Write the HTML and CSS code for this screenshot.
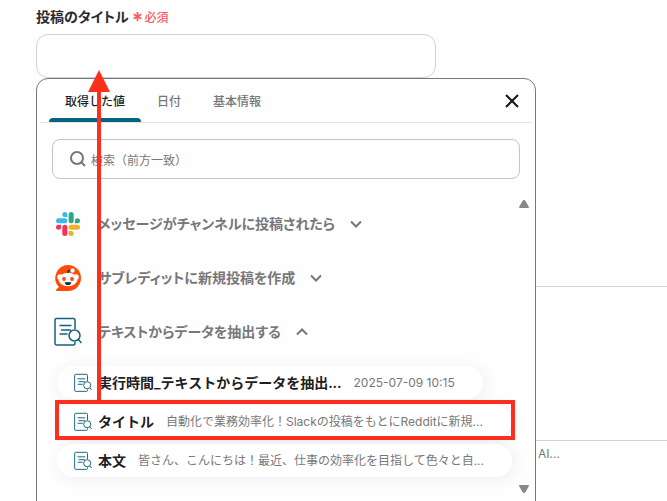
FILE: index.html
```html
<!DOCTYPE html>
<html lang="ja">
<head>
<meta charset="utf-8">
<title>投稿のタイトル</title>
<link rel="stylesheet" href="styles.css">
</head>
<body>
<svg class="defs" aria-hidden="true">
  <symbol id="doc" viewBox="0 0 28 30">
    <path d="M21 12V3a1.5 1.5 0 0 0-1.500-1.500H2.500A1.500 1.500 0 0 0 1 3v23.500A1.500 1.500 0 0 0 2.500 28h17a1.500 1.500 0 0 0 1.500-1.500v-1.500M5.500 8.500h12M7 13h10M5.500 17h8"/>
    <circle cx="20.500" cy="18.500" r="5.500"/>
    <path d="M24.500 22.500l3 3.500"/>
  </symbol>
  <symbol id="chevron" viewBox="0 0 12 8"><path d="M1 1.500l5 5 5-5"/></symbol>
</svg>
<main class="page">
  <section class="field">
    <label class="field-label" for="title">投稿のタイトル <span class="required"><svg class="asterisk" viewBox="0 0 10 10" aria-hidden="true"><path d="M5 0v10M.7 2.500l8.600 5M.7 7.500l8.600-5"/></svg>必須</span></label>
    <input class="field-input" id="title" type="text">
    <div class="picker">
      <header class="picker-head">
        <nav class="tabs">
          <button class="tab tab-active" type="button">取得した値</button>
          <button class="tab" type="button">日付</button>
          <button class="tab" type="button">基本情報</button>
        </nav>
        <button class="close" type="button" aria-label="閉じる"><svg viewBox="0 0 14 14"><path d="M1 1l12 12M13 1L1 13"/></svg></button>
      </header>
      <div class="search">
        <svg viewBox="0 0 16 16" aria-hidden="true"><circle cx="7" cy="7" r="6"/><path d="M11.500 11.500L15 15"/></svg>
        <input type="search" aria-label="検索" placeholder="検索（前方一致）">
      </div>
      <div class="results">
        <div class="groups">
          <button class="group" type="button">
            <span class="logo"><svg class="slack" viewBox="0 0 24 24">
              <path fill="#f5315c" d="M5.042 15.165a2.528 2.528 0 0 1-2.520 2.523A2.528 2.528 0 0 1 0 15.165a2.527 2.527 0 0 1 2.522-2.520h2.520v2.520zM6.313 15.165a2.527 2.527 0 0 1 2.521-2.520 2.527 2.527 0 0 1 2.521 2.520v6.313A2.528 2.528 0 0 1 8.834 24a2.528 2.528 0 0 1-2.521-2.522v-6.313z"/>
              <path fill="#36b9f5" d="M8.834 5.042a2.528 2.528 0 0 1-2.521-2.520A2.528 2.528 0 0 1 8.834 0a2.528 2.528 0 0 1 2.521 2.522v2.520H8.834zM8.834 6.313a2.528 2.528 0 0 1 2.521 2.521 2.528 2.528 0 0 1-2.521 2.521H2.522A2.528 2.528 0 0 1 0 8.834a2.528 2.528 0 0 1 2.522-2.521h6.312z"/>
              <path fill="#2ca982" d="M18.956 8.834a2.528 2.528 0 0 1 2.522-2.521A2.528 2.528 0 0 1 24 8.834a2.528 2.528 0 0 1-2.522 2.521h-2.522V8.834zM17.688 8.834a2.528 2.528 0 0 1-2.523 2.521 2.527 2.527 0 0 1-2.520-2.521V2.522A2.527 2.527 0 0 1 15.165 0a2.528 2.528 0 0 1 2.523 2.522v6.312z"/>
              <path fill="#f2b02e" d="M15.165 18.956a2.528 2.528 0 0 1 2.523 2.522A2.528 2.528 0 0 1 15.165 24a2.527 2.527 0 0 1-2.520-2.522v-2.522h2.520zM15.165 17.688a2.527 2.527 0 0 1-2.520-2.523 2.526 2.526 0 0 1 2.520-2.520h6.313A2.527 2.527 0 0 1 24 15.165a2.528 2.528 0 0 1-2.522 2.523h-6.313z"/>
            </svg></span>
            <span>メッセージがチャンネルに投稿されたら</span>
            <svg class="chevron"><use href="#chevron"/></svg>
          </button>
          <button class="group" type="button">
            <span class="logo"><svg class="reddit" viewBox="0 0 26 26">
              <path fill="#ff4a08" d="M13 0a13 13 0 1 1 0 26H2c-1 0-1.300-1-.6-1.700L4 22A13 13 0 0 1 13 0z"/>
              <circle cx="5" cy="12" r="2.800" fill="#fff"/><circle cx="21" cy="12" r="2.800" fill="#fff"/>
              <ellipse cx="13" cy="14.500" rx="9.500" ry="6.800" fill="#f7fafb"/>
              <path fill="none" stroke="#222" stroke-width="1.200" d="M12.800 8c0-2 1-2.800 3-2.900"/>
              <circle cx="17.500" cy="5.500" r="2.200" fill="#f7fafb"/>
              <circle cx="9" cy="14" r="1.900" fill="#ff4a08"/><circle cx="17" cy="14" r="1.900" fill="#ff4a08"/>
              <path fill="#1b2b33" d="M9.500 17.500q3.500-.8 7 0c-.5 1.700-1.800 2.600-3.500 2.600s-3-.9-3.500-2.600z"/>
            </svg></span>
            <span>サブレディットに新規投稿を作成</span>
            <svg class="chevron"><use href="#chevron"/></svg>
          </button>
          <button class="group" type="button">
            <span class="logo"><svg class="doc-large"><use href="#doc"/></svg></span>
            <span>テキストからデータを抽出する</span>
            <svg class="chevron chevron-up"><use href="#chevron"/></svg>
          </button>
          <div class="values">
            <button class="value" type="button"><svg class="doc-small"><use href="#doc"/></svg><strong>実行時間_テキストからデータを抽出...</strong><span>2025-07-09 10:15</span></button>
            <button class="value" type="button"><svg class="doc-small"><use href="#doc"/></svg><strong>タイトル</strong><span>自動化で業務効率化！Slackの投稿をもとにRedditに新規...</span></button>
            <button class="value" type="button"><svg class="doc-small"><use href="#doc"/></svg><strong>本文</strong><span>皆さん、こんにちは！最近、仕事の効率化を目指して色々と自...</span></button>
          </div>
        </div>
        <div class="scrollbar" aria-hidden="true">
          <svg viewBox="0 0 10 8"><path d="M5 0Q6 0 6.500 1L10 7Q10 8 9 8H1Q0 8 0 7L3.500 1Q4 0 5 0z"/></svg>
          <svg viewBox="0 0 10 8"><path d="M5 8Q4 8 3.500 7L0 1Q0 0 1 0H9Q10 0 10 1L6.500 7Q6 8 5 8z"/></svg>
        </div>
      </div>
    </div>
  </section>
  <div class="body-box"></div>
  <p class="hint">AI...</p>
</main>
<svg class="annotation" width="540" height="460" aria-hidden="true">
  <path fill="#fc2e1c" d="M99 70l11 22h-9v309h-4V92h-9z"/>
  <rect x="57" y="402" width="456" height="36" fill="none" stroke="#fc2e1c" stroke-width="4"/>
</svg>
</body>
</html>
```
FILE: styles.css
```css
* { box-sizing: border-box; }
body {
  margin: 0;
  height: 100vh;
  overflow: hidden;
  position: relative;
  background: #fefefe;
  color: #2b2b2f;
  font-family: Inter, "Noto Sans CJK JP", sans-serif;
  font-size: 12px;
}
button, input { font: inherit; color: inherit; }
button { border: 0; padding: 0; background: none; }
svg { display: block; flex: none; fill: none; }
.defs { position: absolute; width: 0; height: 0; }
.page { padding: 6px 0 0 36px; }
.field { position: relative; }
.field-label {
  display: flex;
  align-items: center;
  gap: 4px;
  height: 20px;
  font-size: 14px;
  font-weight: 600;
  font-feature-settings: "palt";
}
.required {
  display: flex;
  align-items: center;
  gap: 3px;
  color: #fb5b5b;
  font-size: 12px;
  font-weight: 500;
}
.asterisk { width: 9px; height: 9px; stroke: #fb5b5b; stroke-width: 2; }
.field-input {
  display: block;
  width: 400px;
  max-width: 100%;
  height: 44px;
  margin-top: 8px;
  padding: 0 12px;
  border: 1px solid #ccd3da;
  border-radius: 12px;
  background: #fefefe;
}
.picker {
  position: absolute;
  top: 100%;
  left: 0;
  width: 500px;
  max-width: 100%;
  border: 1px solid #77777b;
  border-radius: 12px;
  background: #fefefe;
  color: #77777a;
  padding-bottom: 40px;
}
.picker-head {
  display: flex;
  justify-content: space-between;
  margin: 0 3px;
  padding: 0 13px 0 9px;
  height: 44px;
  border-bottom: 1px solid #e3e3e5;
}
.tabs { display: flex; }
.tab {
  position: relative;
  padding: 0 16px;
  font-weight: 500;
}
.tab-active { color: #1f1f22; }
.tab-active::after {
  content: "";
  position: absolute;
  left: 0;
  right: 0;
  bottom: 0;
  height: 4px;
  border-radius: 4px 4px 0 0;
  background: #04647f;
}
.close svg { width: 14px; height: 14px; stroke: #161616; stroke-width: 2; }
.search {
  display: flex;
  align-items: center;
  gap: 5px;
  height: 40px;
  margin: 16px 15px 0;
  padding: 0 17px;
  border: 1px solid #c6c6c8;
  border-radius: 8px;
}
.search svg { width: 16px; height: 16px; stroke: #77777a; stroke-width: 2; }
.search input {
  flex: 1;
  min-width: 0;
  padding: 2px 0 0;
  border: 0;
  outline: 0;
  background: none;
}
.search input::placeholder { color: #77777a; opacity: 1; }
.results {
  display: flex;
  justify-content: space-between;
  margin-top: 18px;
}
.groups { padding-left: 17px; min-width: 0; }
.group {
  display: flex;
  align-items: center;
  height: 54px;
  font-size: 14px;
  font-weight: 600;
  line-height: 20px;
  font-feature-settings: "palt";
}
.logo {
  display: flex;
  justify-content: center;
  width: 28px;
  margin-right: 16px;
}
.slack { width: 24px; height: 24px; }
.reddit { width: 26px; height: 26px; }
.doc-large { width: 28px; height: 30px; stroke: #16627d; stroke-width: 1.5; }
.doc-small { width: 18px; height: 20px; stroke: #16627d; stroke-width: 1.5; }
.chevron { width: 12px; height: 8px; margin-left: 15px; stroke: #77777a; stroke-width: 2; }
.chevron-up { transform: rotate(180deg); }
.values {
  display: flex;
  flex-direction: column;
  align-items: flex-start;
  gap: 6px;
  padding: 7px 0 0 3px;
}
.value {
  display: flex;
  align-items: center;
  height: 33px;
  padding: 0 28px 0 17px;
  border-radius: 17px;
  background: #fff;
  box-shadow: 2px 2px 14px #50407018;
  line-height: 20px;
  white-space: nowrap;
}
.value strong {
  margin: 0 12px 0 6px;
  color: #202022;
  font-size: 14px;
  font-weight: 600;
}
.scrollbar {
  display: flex;
  flex-direction: column;
  justify-content: space-between;
  flex: none;
  padding: 3px 6px 0 0;
  margin-bottom: -16px;
}
.scrollbar svg { width: 10px; height: 8px; fill: #88888a; }
.body-box {
  height: 155px;
  margin-top: 208px;
  border-top: 1px solid #ccd3da;
  border-bottom: 1px solid #ccd3da;
}
.hint {
  margin: 5px 0 0 502px;
  color: #77777a;
  line-height: 16px;
}
.annotation { position: absolute; top: 0; left: 0; pointer-events: none; }
```
